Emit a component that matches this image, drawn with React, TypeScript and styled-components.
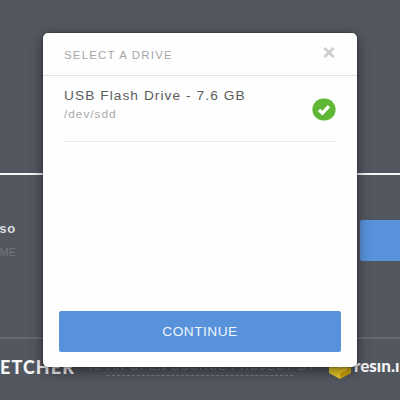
import React from 'react';
import styled, { createGlobalStyle } from 'styled-components';

const GlobalStyle = createGlobalStyle`
  * { box-sizing: border-box; }
  body {
    margin: 0;
    background: #535760;
    font-family: "Liberation Sans", Arial, sans-serif;
    overflow: hidden;
  }
`;

const Page = styled.div`
  position: relative;
  display: flex;
  flex-direction: column;
  width: 400px;
  height: 400px;
  overflow: hidden;
  background: #535760;
`;

const Steps = styled.section`
  height: 175px;
  border-bottom: 2px solid #f6f6f7;
`;

const Main = styled.main`
  display: flex;
  justify-content: space-between;
  height: 162px;
  padding-top: 45px;
`;

const ImageInfo = styled.div`
  display: flex;
  flex-direction: column;
  align-items: flex-end;
  width: 16px;
`;

const ImageName = styled.span`
  font-size: 13px;
  font-weight: 700;
  line-height: 18px;
  letter-spacing: 0.8px;
  color: #dddee0;
`;

const ChangeLink = styled.span`
  margin-top: 6px;
  font-size: 10.5px;
  line-height: 16px;
  letter-spacing: 0.3px;
  color: #74777b;
`;

const FlashButton = styled.button`
  width: 40px;
  height: 41px;
  padding: 0;
  border: 0;
  border-radius: 2px 0 0 2px;
  background: #5792db;
`;

const Footer = styled.footer`
  display: flex;
  align-items: flex-start;
  height: 63px;
  padding-top: 17px;
  border-top: 2px solid #66696c;
  white-space: nowrap;
`;

const Wordmark = styled.span`
  flex: none;
  width: 89px;
  font: 900 18px/22px Lato, sans-serif;
  letter-spacing: 1.05px;
  color: #f4f4f5;
`;

const Tagline = styled.span`
  display: flex;
  flex: none;
  gap: 5px;
  width: 240px;
  font-size: 12px;
  line-height: 21px;
  letter-spacing: 0.82px;
  color: #7b7e84;
`;

const TaglineLink = styled.span`
  height: 20px;
  border-bottom: 1px dashed #7c7f86;
`;

const Cube = styled.svg`
  flex: none;
  width: 22px;
  height: 22px;
  margin-top: 2px;
`;

const Company = styled.span`
  margin-left: 3px;
  font: 900 17px/20px Lato, sans-serif;
  color: #f4f4f5;
`;

const Dialog = styled.div`
  position: absolute;
  top: 32.5px;
  left: 43px;
  display: flex;
  flex-direction: column;
  width: 314px;
  height: 334.5px;
  border-radius: 5px;
  background: #fefefe;
  box-shadow: 0 4px 13px rgba(0, 0, 0, 0.5), 0 0 2px rgba(0, 0, 0, 0.5);
`;

const DialogHeader = styled.header`
  display: flex;
  justify-content: space-between;
  height: 43px;
  padding: 14px 22px 0 21px;
  border-bottom: 1px solid #e4e4e4;
`;

const Title = styled.h1`
  margin: 0;
  font-size: 11.5px;
  font-weight: 400;
  line-height: 17px;
  letter-spacing: 1.17px;
  color: #a6a6a6;
`;

const CloseIcon = styled.svg`
  width: 12px;
  height: 11px;
`;

const DriveList = styled.div`
  flex: 1;
  padding: 0 21px;
`;

const Drive = styled.div`
  display: flex;
  justify-content: space-between;
  height: 66px;
  padding-top: 11px;
  border-bottom: 1px solid #e8e8e8;
`;

const DriveName = styled.div`
  font-size: 13.7px;
  line-height: 18px;
  letter-spacing: 1.07px;
  color: #5c5c5c;
`;

const DrivePath = styled.div`
  font-size: 11.8px;
  line-height: 18px;
  letter-spacing: 1px;
  color: #aaa;
`;

const CheckIcon = styled.svg`
  width: 24px;
  height: 23px;
  margin-top: 11.5px;
`;

const DialogFooter = styled.footer`
  padding: 0 16px 15.5px;
`;

const ContinueButton = styled.button`
  display: block;
  width: 100%;
  height: 41px;
  padding: 0;
  border: 0;
  border-radius: 2px;
  background: #5792db;
  color: #f1f5fc;
  font: 400 13.7px/41px "Liberation Sans", Arial, sans-serif;
  letter-spacing: 0.5px;
`;

export default function App() {
  return (
    <>
      <GlobalStyle />
      <Page>
        <Steps />
        <Main>
          <ImageInfo>
            <ImageName>so</ImageName>
            <ChangeLink>ME</ChangeLink>
          </ImageInfo>
          <FlashButton aria-label="Flash" />
        </Main>
        <Footer>
          <Wordmark>ETCHER</Wordmark>
          <Tagline>
            IS <TaglineLink>AN OPEN SOURCE PROJECT</TaglineLink> BY
          </Tagline>
          <Cube viewBox="0 0 22 22">
            <path d="M11 0 22 5.5 11 11 0 5.5Z" fill="#f5e04a" />
            <path d="M0 5.5 11 11V21L0 15Z" fill="#e9cb29" />
            <path d="M22 5.5 11 11V21L22 15Z" fill="#d2a50c" />
            <path d="M4 7.5 11 11 18 7.5V12L11 16 4 12Z" fill="#f0cc22" />
          </Cube>
          <Company>resın.ı</Company>
        </Footer>
        <Dialog role="dialog">
          <DialogHeader>
            <Title>SELECT A DRIVE</Title>
            <CloseIcon viewBox="0 0 12 11">
              <path d="M1.4 1 10.6 10M10.6 1 1.4 10" stroke="#ccc" strokeWidth="2.6" />
            </CloseIcon>
          </DialogHeader>
          <DriveList>
            <Drive>
              <div>
                <DriveName>USB Flash Drive - 7.6 GB</DriveName>
                <DrivePath>/dev/sdd</DrivePath>
              </div>
              <CheckIcon viewBox="0 0 24 23">
                <rect x="0.4" y="0.4" width="23.2" height="22.2" rx="11.2" fill="#5fb835" />
                <path d="M7 12 10.4 15.2 17 8.2" fill="none" stroke="#fff" strokeWidth="3.2" />
              </CheckIcon>
            </Drive>
          </DriveList>
          <DialogFooter>
            <ContinueButton>CONTINUE</ContinueButton>
          </DialogFooter>
        </Dialog>
      </Page>
    </>
  );
}
